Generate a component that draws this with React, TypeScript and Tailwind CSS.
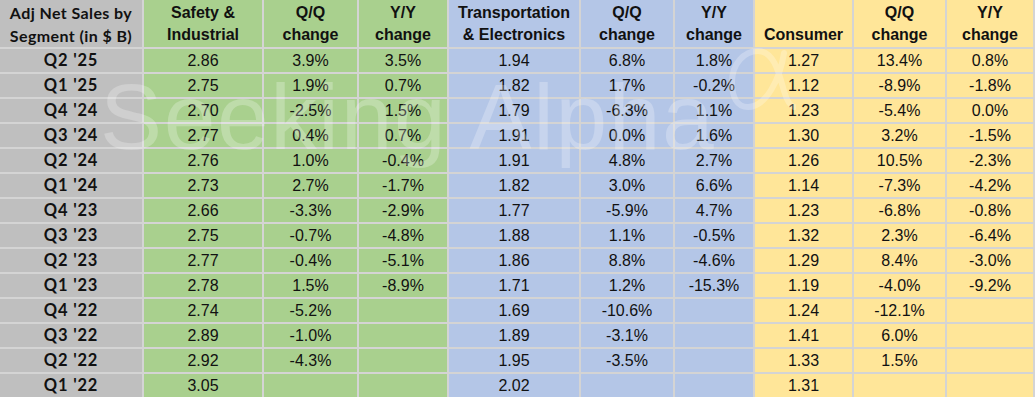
import React from "react";

const rows: string[][] = [
  ["Q2 '25", "2.86", "3.9%", "3.5%", "1.94", "6.8%", "1.8%", "1.27", "13.4%", "0.8%"],
  ["Q1 '25", "2.75", "1.9%", "0.7%", "1.82", "1.7%", "-0.2%", "1.12", "-8.9%", "-1.8%"],
  ["Q4 '24", "2.70", "-2.5%", "1.5%", "1.79", "-6.3%", "1.1%", "1.23", "-5.4%", "0.0%"],
  ["Q3 '24", "2.77", "0.4%", "0.7%", "1.91", "0.0%", "1.6%", "1.30", "3.2%", "-1.5%"],
  ["Q2 '24", "2.76", "1.0%", "-0.4%", "1.91", "4.8%", "2.7%", "1.26", "10.5%", "-2.3%"],
  ["Q1 '24", "2.73", "2.7%", "-1.7%", "1.82", "3.0%", "6.6%", "1.14", "-7.3%", "-4.2%"],
  ["Q4 '23", "2.66", "-3.3%", "-2.9%", "1.77", "-5.9%", "4.7%", "1.23", "-6.8%", "-0.8%"],
  ["Q3 '23", "2.75", "-0.7%", "-4.8%", "1.88", "1.1%", "-0.5%", "1.32", "2.3%", "-6.4%"],
  ["Q2 '23", "2.77", "-0.4%", "-5.1%", "1.86", "8.8%", "-4.6%", "1.29", "8.4%", "-3.0%"],
  ["Q1 '23", "2.78", "1.5%", "-8.9%", "1.71", "1.2%", "-15.3%", "1.19", "-4.0%", "-9.2%"],
  ["Q4 '22", "2.74", "-5.2%", "", "1.69", "-10.6%", "", "1.24", "-12.1%", ""],
  ["Q3 '22", "2.89", "-1.0%", "", "1.89", "-3.1%", "", "1.41", "6.0%", ""],
  ["Q2 '22", "2.92", "-4.3%", "", "1.95", "-3.5%", "", "1.33", "1.5%", ""],
  ["Q1 '22", "3.05", "", "", "2.02", "", "", "1.31", "", ""],
];

const colBg = [
  "bg-[#bfbfbf]",
  "bg-[#a9d08e]",
  "bg-[#a9d08e]",
  "bg-[#a9d08e]",
  "bg-[#b4c6e7]",
  "bg-[#b4c6e7]",
  "bg-[#b4c6e7]",
  "bg-[#ffe699]",
  "bg-[#ffe699]",
  "bg-[#ffe699]",
];

const headers: string[][] = [
  ["Safety &", "Industrial"],
  ["Q/Q", "change"],
  ["Y/Y", "change"],
  ["Transportation", "& Electronics"],
  ["Q/Q", "change"],
  ["Y/Y", "change"],
  ["Consumer"],
  ["Q/Q", "change"],
  ["Y/Y", "change"],
];

const calibri = "font-['Lato','Open_Sans',sans-serif]";
const arial = "font-['Liberation_Sans',Arial,sans-serif]";

export default function App() {
  return (
    <div className="w-[1035px] h-[401px] bg-white overflow-hidden">
      <div className="relative">
        <div className="grid grid-cols-[142px_118px_93px_88px_130px_92px_78px_97px_91px_86px] grid-rows-[47px] auto-rows-[23px] gap-[2px] bg-[#d4d4d4] pr-[2px] w-[1035px]">
          <div
            className={`${colBg[0]} ${calibri} font-bold text-[16px] tracking-[0.4px] leading-[23px] text-[#111] flex flex-col items-center justify-center`}
          >
            <span>Adj Net Sales by</span>
            <span>Segment (in $ B)</span>
          </div>
          {headers.map((h, i) => (
            <div
              key={i}
              className={`${colBg[i + 1]} ${arial} font-bold text-[16px] leading-[22px] text-[#111] flex flex-col items-center justify-end pb-[1px]`}
            >
              {h.map((line, j) => (
                <span key={j}>{line}</span>
              ))}
            </div>
          ))}
          {rows.map((r, ri) =>
            r.map((cell, ci) => (
              <div
                key={`${ri}-${ci}`}
                className={`${colBg[ci]} flex items-center justify-center text-[#111] ${
                  ci === 0
                    ? `${calibri} font-bold text-[16.5px] tracking-[0.8px]`
                    : `${arial} text-[16px]`
                }`}
              >
                {cell}
              </div>
            ))
          )}
        </div>
        <span className="pointer-events-none absolute left-[100px] top-[71px] whitespace-nowrap text-white/25 font-['Liberation_Sans',Arial,sans-serif] text-[93px] leading-[93px] tracking-[1.6px]">
          Seeking Alpha
        </span>
        <svg
          className="pointer-events-none absolute left-[728px] top-[45px]"
          width="68"
          height="68"
          viewBox="0 0 68 68"
          fill="none"
        >
          <path
            d="M56 8 C 52 34, 38 62, 20 62 C 9 62, 4 52, 4 37 C 4 19, 16 6, 30 6 C 46 6, 51 28, 56 46 C 59 56, 62 61, 66 62"
            stroke="white"
            strokeOpacity="0.25"
            strokeWidth="6"
            strokeLinecap="round"
          />
        </svg>
      </div>
    </div>
  );
}
